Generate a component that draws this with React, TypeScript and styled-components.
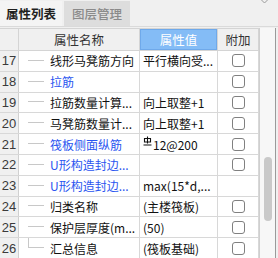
import React from "react";
import styled, { createGlobalStyle } from "styled-components";

const GlobalStyle = createGlobalStyle`
  html, body {
    margin: 0;
    padding: 0;
    background: #f0f0f0;
  }
  body {
    font-family: "Noto Sans CJK SC", "Liberation Sans", sans-serif;
    font-size: 12px;
    color: #111;
  }
`;

const Panel = styled.div`
  width: 278px;
  height: 258px;
  overflow: hidden;
  background: #f0f0f0;
  display: flex;
  flex-direction: column;
`;

const TabBar = styled.div`
  height: 27px;
  display: flex;
  align-items: flex-end;
  border-bottom: 1px solid #dadada;
  box-sizing: border-box;
  flex-shrink: 0;
`;

const Tab = styled.div<{ $active?: boolean }>`
  height: 25px;
  padding: 0 ${(p) => (p.$active ? "6px" : "8px")};
  margin-right: 2px;
  display: flex;
  align-items: center;
  font-size: 12.5px;
  font-weight: ${(p) => (p.$active ? 600 : 500)};
  color: ${(p) => (p.$active ? "#1f1f1f" : "#8a8a8a")};
  background: ${(p) => (p.$active ? "#f4f4f4" : "#dddddd")};
`;

const CloseMark = styled.svg`
  margin-left: auto;
  margin-right: 10px;
  align-self: flex-start;
`;

const Body = styled.div`
  flex: 1;
  display: flex;
  padding-top: 1px;
  min-height: 0;
`;

const Table = styled.div`
  width: 259px;
  display: flex;
  flex-direction: column;
  background: #fff;
`;

const HeadRow = styled.div`
  height: 21px;
  display: grid;
  grid-template-columns: 19px 121px 78px 41px;
  border-top: 1px solid #d4d4d4;
  border-bottom: 1px solid #d4d4d4;
  background: #f0f0f0;
  flex-shrink: 0;
`;

const HeadCell = styled.div<{ $selected?: boolean }>`
  display: flex;
  align-items: center;
  justify-content: center;
  font-size: 12.5px;
  border-right: 1px solid #d4d4d4;
  color: ${(p) => (p.$selected ? "#ffffff" : "#333")};
  background: ${(p) => (p.$selected ? "#84bcf6" : "transparent")};
  ${(p) => p.$selected && "box-shadow: inset 0 0 0 1px #6fa9ea;"}
`;

const Row = styled.div`
  height: 20.8px;
  box-sizing: border-box;
  display: grid;
  grid-template-columns: 19px 121px 78px 41px;
  border-bottom: 1px solid #d8d8d8;
  flex-shrink: 0;
`;

const NumCell = styled.div`
  background: #f0f0f0;
  border-right: 1px solid #d0d0d0;
  display: flex;
  align-items: center;
  justify-content: center;
  font-family: "Liberation Sans", "Noto Sans", sans-serif;
  font-size: 13px;
  color: #3a3a3a;
`;

const NameCell = styled.div<{ $blue?: boolean }>`
  display: flex;
  align-items: center;
  border-right: 1px solid #d8d8d8;
  color: ${(p) => (p.$blue ? "#2a55f0" : "#111")};
  white-space: nowrap;
  overflow: hidden;
`;

const TreeLine = styled.span<{ $last?: boolean }>`
  width: 16px;
  height: 50%;
  margin-left: 9px;
  margin-right: 6px;
  align-self: flex-start;
  box-sizing: border-box;
  border-bottom: 1px solid #c8c8c8;
  ${(p) => p.$last && "border-left: 1px solid #c8c8c8;"}
  flex-shrink: 0;
`;

const ValueCell = styled.div`
  display: flex;
  align-items: center;
  padding-left: 3px;
  border-right: 1px solid #d8d8d8;
  white-space: nowrap;
  overflow: hidden;
  color: #111;
`;

const CheckCell = styled.div`
  display: flex;
  align-items: center;
  justify-content: center;
  border-right: 1px solid #d8d8d8;
`;

const Box = styled.span`
  width: 13px;
  height: 13px;
  box-sizing: border-box;
  border: 1px solid #808080;
  border-radius: 3px;
  background: #fff;
`;

const Rebar = styled.svg`
  margin-right: 1px;
  align-self: flex-start;
  margin-top: 2px;
`;

const ScrollTrack = styled.div`
  width: 17px;
  background: #f7f7f7;
  border-left: 1px solid #cfcfcf;
  border-right: 1px solid #9a9a9a;
  display: flex;
  justify-content: center;
  padding-top: 129px;
  box-sizing: border-box;
`;

const Thumb = styled.div`
  width: 8px;
  height: 64px;
  border-radius: 4px;
  background: #c9c9c9;
`;

type Item = { n: number; name: string; value?: React.ReactNode; blue?: boolean; check?: boolean; last?: boolean };

const items: Item[] = [
  { n: 17, name: "线形马凳筋方向", value: "平行横向受...", check: true },
  { n: 18, name: "拉筋", blue: true, check: true },
  { n: 19, name: "拉筋数量计算...", value: "向上取整+1", check: true },
  { n: 20, name: "马凳筋数量计...", value: "向上取整+1", check: true },
  {
    n: 21,
    name: "筏板侧面纵筋",
    blue: true,
    check: true,
    value: (
      <>
        <Rebar width="9" height="10" viewBox="0 0 9 10">
          <path d="M1.5 2.5h6v3.5h-6z M4.5 0.5v7 M0.5 9h8" fill="none" stroke="#111" strokeWidth="1.1" />
        </Rebar>
        12@200
      </>
    ),
  },
  { n: 22, name: "U形构造封边...", blue: true, check: true },
  { n: 23, name: "U形构造封边...", blue: true, value: "max(15*d,..." },
  { n: 24, name: "归类名称", value: "(主楼筏板)", check: true },
  { n: 25, name: "保护层厚度(m...", value: "(50)", check: true },
  { n: 26, name: "汇总信息", value: "(筏板基础)", check: true, last: true },
];

export default function App() {
  return (
    <Panel>
      <GlobalStyle />
      <TabBar>
        <Tab $active>属性列表</Tab>
        <Tab>图层管理</Tab>
        <CloseMark width="7" height="4" viewBox="0 0 7 4">
          <path d="M0.5 0 L3.5 3 M6.5 0 L3.5 3" stroke="#9a9a9a" strokeWidth="1" fill="none" />
        </CloseMark>
      </TabBar>
      <Body>
        <Table>
          <HeadRow>
            <HeadCell />
            <HeadCell>属性名称</HeadCell>
            <HeadCell $selected>属性值</HeadCell>
            <HeadCell>附加</HeadCell>
          </HeadRow>
          {items.map((it) => (
            <Row key={it.n}>
              <NumCell>{it.n}</NumCell>
              <NameCell $blue={it.blue}>
                <TreeLine $last={it.last} />
                {it.name}
              </NameCell>
              <ValueCell>{it.value}</ValueCell>
              <CheckCell>{it.check && <Box />}</CheckCell>
            </Row>
          ))}
        </Table>
        <ScrollTrack>
          <Thumb />
        </ScrollTrack>
      </Body>
    </Panel>
  );
}
